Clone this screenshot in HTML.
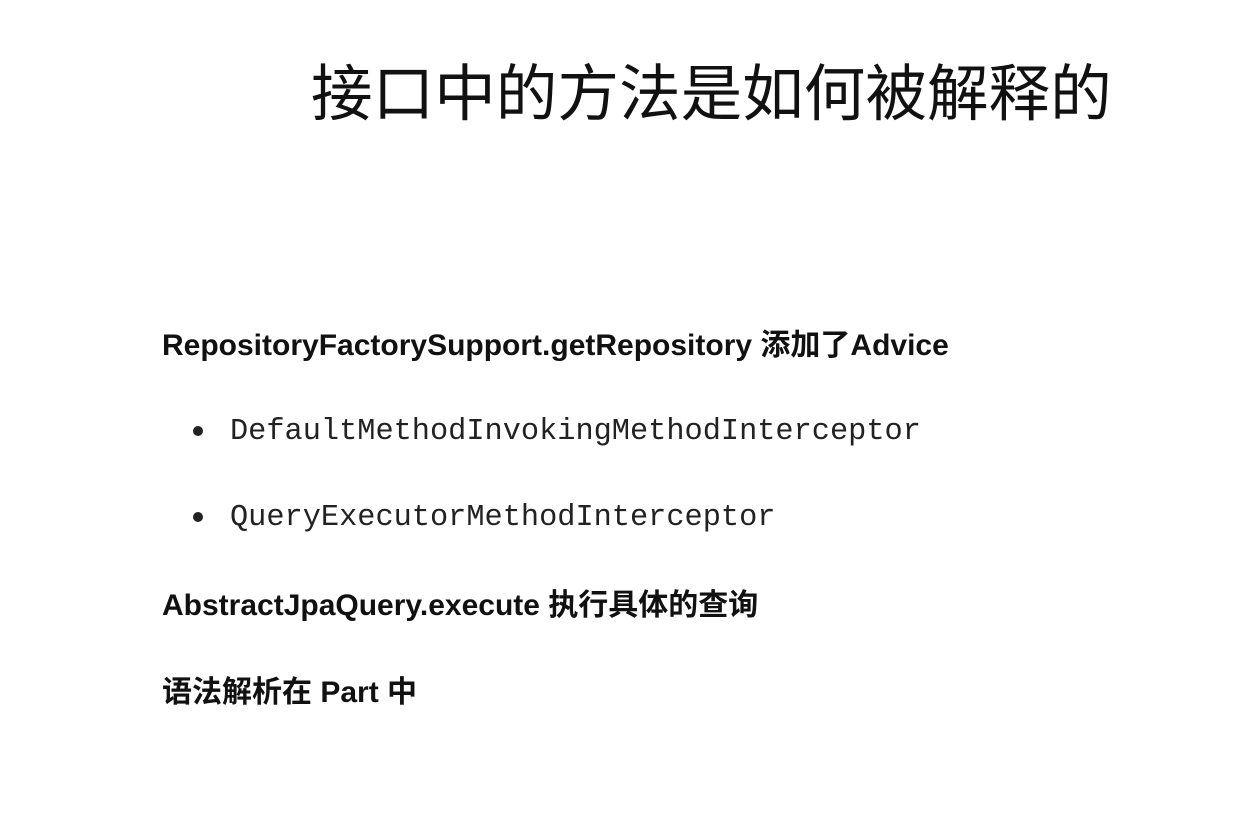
<!DOCTYPE html>
<html><head><meta charset="utf-8"><style>
html,body{margin:0;padding:0;background:#fff;width:1240px;height:829px;overflow:hidden;position:relative}
div{position:absolute;white-space:nowrap;color:#111}
.t{left:311px;top:44px;font:400 61.6px "Liberation Sans","Noto Sans CJK SC",sans-serif}
.b{left:162px;font:700 30px "Liberation Sans","Noto Sans CJK SC",sans-serif}
.m{left:230px;font:400 30.3px "Liberation Mono",monospace;color:#222}
.d{left:193px;width:10px;height:10px;border-radius:50%;background:#222}
</style></head><body>
<div class="t">接口中的方法是如何被解释的</div>
<div class="b" style="top:320px">RepositoryFactorySupport.getRepository 添加了Advice</div>
<div class="d" style="top:426px"></div>
<div class="m" style="top:415px">DefaultMethodInvokingMethodInterceptor</div>
<div class="d" style="top:512px"></div>
<div class="m" style="top:501px">QueryExecutorMethodInterceptor</div>
<div class="b" style="top:580px">AbstractJpaQuery.execute 执行具体的查询</div>
<div class="b" style="top:667px">语法解析在 Part 中</div>
</body></html>
